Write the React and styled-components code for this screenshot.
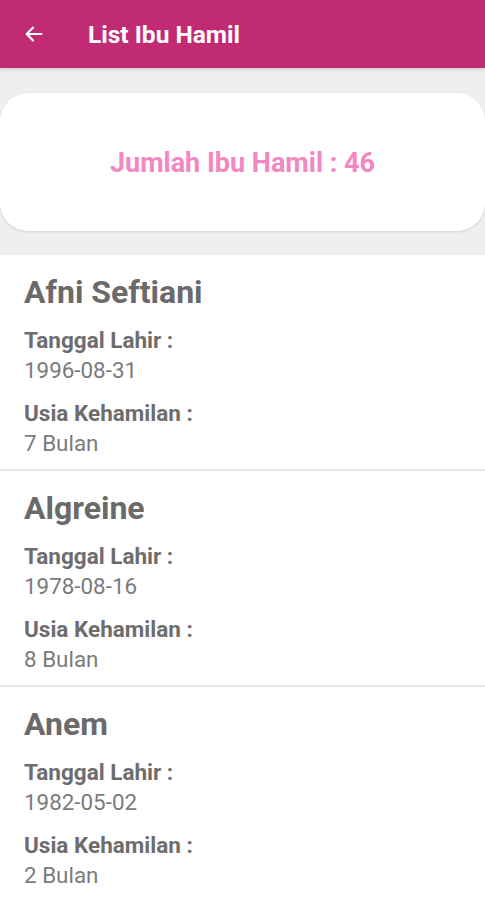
import React from "react";
import styled, { createGlobalStyle } from "styled-components";

const Global = createGlobalStyle`
  html, body { margin: 0; padding: 0; background: #ffffff; }
  body { font-family: Roboto, "Noto Sans", Arial, sans-serif; }
`;

const Page = styled.div`
  width: 485px;
  min-height: 900px;
  background: #ffffff;
  display: flex;
  flex-direction: column;
`;

const AppBar = styled.header`
  height: 68px;
  background: #c12b73;
  display: flex;
  align-items: center;
  padding-left: 23px;
  box-sizing: border-box;
  box-shadow: 0 2px 3px rgba(0, 0, 0, 0.12);
  position: relative;
  z-index: 1;
`;

const BackButton = styled.button`
  width: 22px;
  height: 22px;
  padding: 0;
  border: 0;
  background: none;
  display: flex;
  align-items: center;
  justify-content: center;
  margin-right: 43px;
  margin-top: -1px;
`;

const Title = styled.h1`
  margin: 0;
  color: #ffffff;
  font-size: 24.5px;
  font-weight: 700;
`;

const SummaryArea = styled.section`
  background: #efefef;
  padding: 25px 0 24px;
`;

const SummaryCard = styled.div`
  height: 138px;
  background: #ffffff;
  border-radius: 28px;
  box-shadow: 0 1px 3px rgba(0, 0, 0, 0.12);
  display: flex;
  align-items: center;
  justify-content: center;
`;

const SummaryText = styled.span`
  color: #f387c1;
  font-size: 27px;
  font-weight: 700;
  margin-top: 2px;
`;

const List = styled.ul`
  list-style: none;
  margin: 0;
  padding: 0;
`;

const Item = styled.li`
  padding: 18px 24px 11px;
  border-bottom: ${(p) => (p.$last ? "none" : "2px solid #e6e6e6")};
  display: flex;
  flex-direction: column;
  gap: 13px;
`;

const Name = styled.h2`
  margin: 0 0 1px;
  font-size: 32px;
  line-height: 38px;
  font-weight: 700;
  color: #6a6a6a;
`;

const Field = styled.div`
  display: flex;
  flex-direction: column;
`;

const Label = styled.span`
  font-size: 22.5px;
  line-height: 30px;
  font-weight: 700;
  color: #6d6d6d;
`;

const Value = styled.span`
  font-size: 22.4px;
  line-height: 30px;
  font-weight: 400;
  color: #7b7b7b;
`;

const data = [
  { name: "Afni Seftiani", lahir: "1996-08-31", usia: "7 Bulan" },
  { name: "Algreine", lahir: "1978-08-16", usia: "8 Bulan" },
  { name: "Anem", lahir: "1982-05-02", usia: "2 Bulan" },
];

export default function App() {
  return (
    <Page>
      <Global />
      <AppBar>
        <BackButton aria-label="Kembali">
          <svg width="22" height="22" viewBox="0 0 24 24" fill="none">
            <path
              d="M20 12H5M11 5l-7 7 7 7"
              stroke="#ffffff"
              strokeWidth="2.4"
              strokeLinecap="round"
              strokeLinejoin="round"
            />
          </svg>
        </BackButton>
        <Title>List Ibu Hamil</Title>
      </AppBar>
      <SummaryArea>
        <SummaryCard>
          <SummaryText>Jumlah Ibu Hamil : 46</SummaryText>
        </SummaryCard>
      </SummaryArea>
      <List>
        {data.map((d, i) => (
          <Item key={d.name} $last={i === data.length - 1}>
            <Name>{d.name}</Name>
            <Field>
              <Label>Tanggal Lahir :</Label>
              <Value>{d.lahir}</Value>
            </Field>
            <Field>
              <Label>Usia Kehamilan :</Label>
              <Value>{d.usia}</Value>
            </Field>
          </Item>
        ))}
      </List>
    </Page>
  );
}
